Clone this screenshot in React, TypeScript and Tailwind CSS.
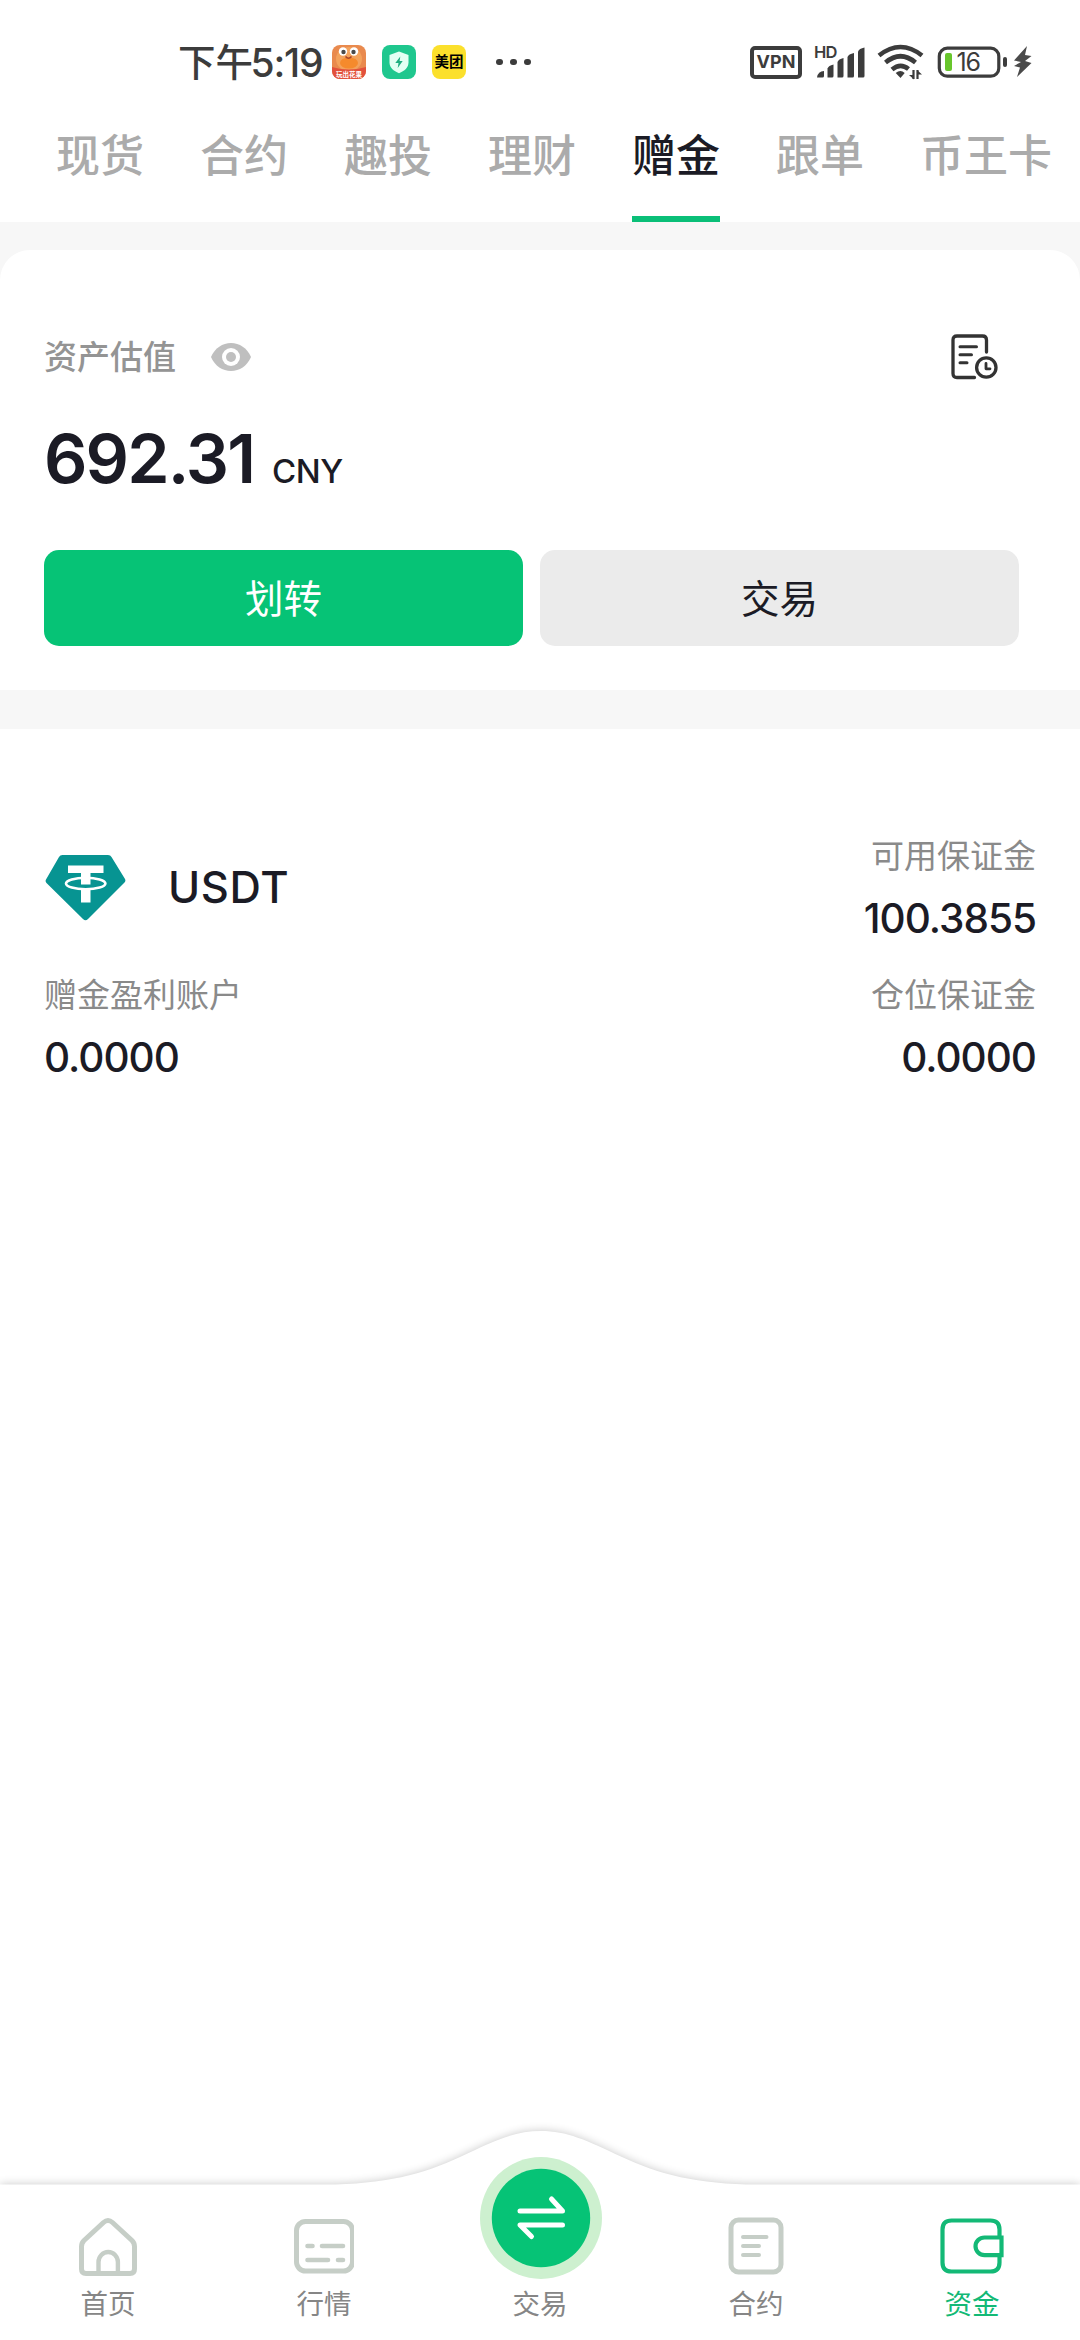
import type { ReactNode } from 'react';

const tabs = ['现货', '合约', '趣投', '理财', '赠金', '跟单', '币王卡'];

function MascotIcon() {
  return (
    <svg className="size-[34px]" viewBox="0 0 34 34">
      <defs>
        <clipPath id="mascot"><rect width="34" height="34" rx="8" /></clipPath>
      </defs>
      <g clipPath="url(#mascot)">
        <rect width="34" height="34" fill="#e98a4e" />
        <ellipse cx="17" cy="14" rx="13" ry="12" fill="#f3a25c" />
        <ellipse cx="17" cy="18" rx="9" ry="5.5" fill="#f58a2c" />
        <circle cx="11" cy="6.5" r="4.2" fill="#fff" />
        <circle cx="22" cy="6.5" r="4.2" fill="#fff" />
        <circle cx="11.5" cy="7" r="2.2" fill="#4a4a4a" />
        <circle cx="21.5" cy="7" r="2.2" fill="#4a4a4a" />
        <path d="M13.5 11.5q3 3.5 6 0" stroke="#a8452a" strokeWidth="1.6" fill="none" />
        <path d="M0 22q17 5 34 0v12H0z" fill="#e2513c" />
        <text x="17" y="31.500" fontSize="6.500" fontWeight="700" textAnchor="middle" fill="#fff" fontFamily="Noto Sans CJK SC, sans-serif">玩出花果</text>
      </g>
    </svg>
  );
}

function ShieldIcon() {
  return (
    <svg className="size-[34px]" viewBox="0 0 34 34">
      <rect width="34" height="34" rx="8" fill="#1fc78e" />
      <path d="M17 6.5l9.5 3.6v7.4c0 5.200-4 8.400-9.500 10.800C11.500 25.900 7.500 22.700 7.500 17.500v-7.400z" fill="#e3fff3" />
      <path d="M18.300 11.500l-5 6.600h3.200l-.8 4.800 5-6.800h-3.100z" fill="#1fae80" />
    </svg>
  );
}

function SignalIcon() {
  return (
    <svg className="h-[34px] w-[52px] overflow-visible" viewBox="0 0 52 34" fill="#3c3c3c">
      <text x="0" y="12.500" fontSize="16.500" fontWeight="600" textLength="23.500" fontFamily="Inter, sans-serif">HD</text>
      <path d="M3 32.500Q4 26 10 26v5q0 1.500-1.500 1.500z" />
      <path d="M13.500 32.500V23.500q1-3 6-4V31q0 1.500-1.500 1.500z" />
      <path d="M23.500 32.500V17q1-3 6-4V31q0 1.500-1.500 1.500z" />
      <path d="M33.500 32.500V12q1-3 6.500-4V31q0 1.500-1.500 1.500z" />
      <path d="M44 32.500V6.500q1-3 6.500-4V31q0 1.500-1.500 1.500z" />
    </svg>
  );
}

function WifiIcon() {
  return (
    <svg className="h-[36px] w-[48px]" viewBox="0 0 48 36" fill="none" stroke="#3c3c3c" strokeWidth="4.600">
      <path d="M2 11.500Q23.500-5.500 45 11.500" />
      <path d="M8.500 18.500Q23.500 6 38.500 18.500" />
      <path d="M15 25.500Q23.500 18.500 31.500 25" />
      <path d="M23.500 34l-4.800-5q4.800-4 9 0z" fill="#3c3c3c" stroke="none" />
      <path d="M36.500 26v9M40.500 26v9" strokeWidth="2.200" />
      <path d="M32 31h5v4.500zM40 30.500h5l-5-4.500z" fill="#3c3c3c" stroke="none" />
    </svg>
  );
}

function BatteryIcon() {
  return (
    <svg className="h-[34px] w-[96px]" viewBox="0 0 96 34">
      <rect x="2.300" y="3.200" width="59.500" height="28" rx="8" fill="none" stroke="#3c3c3c" strokeWidth="3.200" />
      <rect x="8" y="8" width="7" height="18" rx="2" fill="#68c62c" />
      <text x="19.500" y="26" fontSize="25" textLength="24.500" fill="#3c3c3c" fontFamily="Inter, sans-serif">16</text>
      <rect x="66" y="12" width="4" height="10" rx="2" fill="#3c3c3c" />
      <path d="M90 1L77 15.500l7 1.500-7 4 6 1.500-3 9.500L94.500 18l-6.500-2 6.500-5-6.500-1z" fill="#4a4a4a" />
    </svg>
  );
}

function StatusBar() {
  return (
    <div className="flex h-[112px] items-start pt-[45px] pr-[47px] pl-[178px]">
      <div className="flex h-[34px] w-[154px] items-center whitespace-nowrap text-[37.500px] leading-none text-[#3c3c3c]">
        <span className="-mt-1 w-[72.500px] font-['Noto_Sans_CJK_SC',sans-serif] font-medium">下午</span>
        <span className="font-[Inter,sans-serif] text-[39px] font-medium tracking-[-1.200px]">5:19</span>
      </div>
      <div className="flex h-[34px] items-center gap-4">
        <MascotIcon />
        <ShieldIcon />
        <div className="flex size-[34px] items-center justify-center rounded-[8px] bg-[#fbe02c] font-['Noto_Sans_CJK_SC',sans-serif] text-[14.500px] leading-none font-bold text-black">
          <span className="-mt-px whitespace-nowrap">美团</span>
        </div>
      </div>
      <div className="ml-[30px] flex h-[34px] items-center gap-[7.500px]">
        <span className="size-[6.500px] rounded-full bg-[#3c3c3c]" />
        <span className="size-[6.500px] rounded-full bg-[#3c3c3c]" />
        <span className="size-[6.500px] rounded-full bg-[#3c3c3c]" />
      </div>
      <div className="ml-auto flex h-[34px] items-center">
        <div className="flex h-[33px] w-[52px] items-center justify-center rounded-[5px] border-4 border-[#3c3c3c] font-[Inter,sans-serif] text-[18px] leading-none font-bold text-[#3c3c3c]">VPN</div>
        <div className="ml-[12px] flex"><SignalIcon /></div>
        <div className="ml-[11px] flex"><WifiIcon /></div>
        <div className="ml-[12px] flex"><BatteryIcon /></div>
      </div>
    </div>
  );
}

function TabBar() {
  return (
    <div className="flex h-[110px] gap-[56px] pl-[56px] text-[44px] leading-none font-medium">
      {tabs.map((tab) => (
        <div
          key={tab}
          className={
            tab === '赠金'
              ? 'h-full shrink-0 border-b-[6px] border-[#0abf78] pt-[19px] whitespace-nowrap text-[#1b1b25]'
              : 'h-full shrink-0 pt-[19px] whitespace-nowrap text-[#ababab]'
          }
        >
          {tab}
        </div>
      ))}
    </div>
  );
}

function EyeIcon() {
  return (
    <svg className="h-[28px] w-[40px]" viewBox="0 0 40 28">
      <path d="M0 14C4 5 11.500 0 20 0s16 5 20 14c-4 9-11.500 14-20 14S4 23 0 14z" fill="#bfbfbf" />
      <circle cx="20" cy="14" r="9" fill="#fff" />
      <circle cx="20" cy="14" r="5" fill="#bfbfbf" />
    </svg>
  );
}

function HistoryIcon() {
  return (
    <svg className="h-[46px] w-[48px]" viewBox="0 0 48 46" fill="none" stroke="#333" strokeWidth="3.300" strokeLinecap="round" strokeLinejoin="round">
      <path d="M23.500 43.500H6Q2 43.500 2 39.500V6Q2 2 6 2H31.500Q35.500 2 35.500 6V18" />
      <path d="M9 12.700H25.500M9 20.700H20.500M9 28.700H16" strokeWidth="3" />
      <circle cx="35.300" cy="33.500" r="9.700" />
      <path d="M35 29.500v5.300h4" strokeWidth="2.800" />
    </svg>
  );
}

function AssetCard() {
  return (
    <section className="bg-[#f7f7f7] pt-[28px]">
      <div className="h-[440px] rounded-t-[30px] bg-white px-[44px] pt-[87px]">
        <div className="flex h-[40px] items-center">
          <span className="-mt-1 text-[33px] leading-none font-medium text-[#949494]">资产估值</span>
          <span className="ml-[35px] flex"><EyeIcon /></span>
          <span className="mr-[37px] ml-auto flex"><HistoryIcon /></span>
        </div>
        <div className="mt-[47px] flex h-[66px] items-baseline font-[Inter,sans-serif] leading-none text-[#1b1b25]">
          <span className="text-[68px] font-semibold tracking-[-1.900px]">692.31</span>
          <span className="ml-[18px] text-[33px] font-medium tracking-[-0.500px]">CNY</span>
        </div>
        <div className="mt-[60px] flex gap-[17px] text-[38.500px] leading-none">
          <button className="h-[96px] w-[479px] rounded-[15px] bg-[#06c376] pb-[4px] text-white">划转</button>
          <button className="h-[96px] w-[479px] rounded-[15px] bg-[#ebebeb] pb-[4px] text-[#1b1b25]">交易</button>
        </div>
      </div>
      <div className="h-[39px]" />
    </section>
  );
}

function TetherIcon() {
  return (
    <svg className="h-[66px] w-[81px]" viewBox="0 0 81 66">
      <path d="M17.500 0H63Q65.500 0 66.500 2L80 24Q81 26 79.500 27.500L43 64Q40.500 66.500 38 64L1.500 28Q0 26.500 1 24.500L14 2Q15 0 17.500 0z" fill="#079492" />
      <path d="M23 10.500H58.500V18H45.500V29.500H36V18H23zM36 35H45.500V47.500H36z" fill="#fff" />
      <ellipse cx="40.700" cy="28.500" rx="19.700" ry="5.800" fill="none" stroke="#fff" strokeWidth="2.600" />
    </svg>
  );
}

function Field({ label, value, right }: { label: string; value: string; right?: boolean }) {
  return (
    <div className={right ? 'flex flex-col items-end' : 'flex flex-col items-start'}>
      <span className="h-[44px] text-[33px] leading-[40px] text-[#8a8a8a]">{label}</span>
      <span className="mt-[19px] h-[44px] font-[Inter,sans-serif] text-[40.500px] leading-[44px] font-medium tracking-[-1px] text-[#1b1b25]">{value}</span>
    </div>
  );
}

function Holdings() {
  return (
    <section className="flex flex-col gap-8 px-[44px] pt-[105px]">
      <div className="flex justify-between">
        <div className="flex h-[107px] items-center pl-px">
          <TetherIcon />
          <span className="ml-[42px] font-[Inter,sans-serif] text-[43.500px] leading-none font-medium tracking-[0.600px] text-[#1b1b25]">USDT</span>
        </div>
        <Field label="可用保证金" value="100.3855" right />
      </div>
      <div className="flex justify-between">
        <Field label="赠金盈利账户" value="0.0000" />
        <Field label="仓位保证金" value="0.0000" right />
      </div>
    </section>
  );
}

function NavBackdrop() {
  const outline = 'M0 84.500H325C384 84.500 424 74 460 57S515 31 541 31S586 40 622 57S698 84.500 757 84.500H1080V240H0z';
  return (
    <svg className="absolute inset-0 h-full w-full" viewBox="0 0 1080 240">
      <defs>
        <filter id="nav-blur" x="-5%" y="-20%" width="110%" height="140%"><feGaussianBlur stdDeviation="5" /></filter>
      </defs>
      <path d={outline} fill="#000" opacity="0.220" filter="url(#nav-blur)" />
      <path d={outline} fill="#fff" />
    </svg>
  );
}

function NavItem({ label, icon, active }: { label: string; icon: ReactNode; active?: boolean }) {
  return (
    <div className="flex flex-col items-center pt-[117px]">
      <div className="flex h-[60px] items-center">{icon}</div>
      <span className={active ? 'mt-[12px] text-[27.500px] leading-none text-[#13b976]' : 'mt-[12px] text-[27.500px] leading-none text-[#868686]'}>{label}</span>
    </div>
  );
}

const grey = '#c6cec7';

function BottomNav() {
  return (
    <nav className="relative mt-auto h-[240px]">
      <NavBackdrop />
      <div className="relative grid h-full grid-cols-5">
        <NavItem
          label="首页"
          icon={
            <svg className="h-[60px] w-[60px]" viewBox="0 0 60 60" fill="none" stroke={grey} strokeWidth="5" strokeLinejoin="round">
              <path d="M25.500 5.500Q30 1.500 34.500 5.500L54 23.500Q56.500 26 56.500 29.500V52Q56.500 56.500 52 56.500H8Q3.500 56.500 3.500 52V29.500Q3.500 26 6 23.500z" />
              <path d="M20.500 56V45a9.700 10 0 0 1 19.400 0V56" strokeWidth="4.400" />
            </svg>
          }
        />
        <NavItem
          label="行情"
          icon={
            <svg className="h-[60px] w-[60px]" viewBox="0 0 60 60" fill="none" stroke={grey} strokeWidth="5" strokeLinecap="round">
              <rect x="2.500" y="4.500" width="56" height="49.500" rx="9" />
              <path d="M13.500 29h5M28 29H49M13.500 43H34M44 43h5" strokeWidth="4.600" />
            </svg>
          }
        />
        <div className="flex flex-col items-center pt-[57px]">
          <svg className="ml-[2px] h-[122px] w-[122px]" viewBox="0 0 122 122" fill="none">
            <circle cx="61" cy="61" r="61" fill="#cdf0cf" />
            <circle cx="61" cy="61" r="49.200" fill="#06c376" />
            <path d="M40 54H82.500L71.500 42M82.500 68H40L51.500 79.500" stroke="#fff" strokeWidth="5" strokeLinecap="round" strokeLinejoin="round" />
          </svg>
          <span className="mt-[10px] text-[27.500px] leading-none text-[#868686]">交易</span>
        </div>
        <NavItem
          label="合约"
          icon={
            <svg className="h-[60px] w-[56px]" viewBox="0 0 56 60" fill="none" stroke={grey} strokeWidth="5" strokeLinecap="round">
              <rect x="3" y="3" width="50" height="52" rx="7.500" />
              <path d="M15 20H38.500M15 29H31M15 38H31" strokeWidth="4" />
            </svg>
          }
        />
        <NavItem
          label="资金"
          active
          icon={
            <svg className="h-[60px] w-[64px]" viewBox="0 0 64 60" fill="none" stroke="#13b976" strokeWidth="4.200">
              <path d="M59.500 20V12.500Q59.500 3.500 50.500 3.500H11.500Q2.500 3.500 2.500 12.500V45.500Q2.500 54.500 11.500 54.500H50.500Q59.500 54.500 59.500 45.500V39" />
              <path d="M61.500 20.500H44.500a9 8.800 0 0 0 0 17.600H61.500z" />
            </svg>
          }
        />
      </div>
    </nav>
  );
}

export default function App() {
  return (
    <div className="flex h-[2340px] w-[1080px] flex-col overflow-hidden bg-white font-['Noto_Sans_CJK_SC',sans-serif]">
      <header>
        <StatusBar />
        <TabBar />
      </header>
      <AssetCard />
      <Holdings />
      <BottomNav />
    </div>
  );
}
